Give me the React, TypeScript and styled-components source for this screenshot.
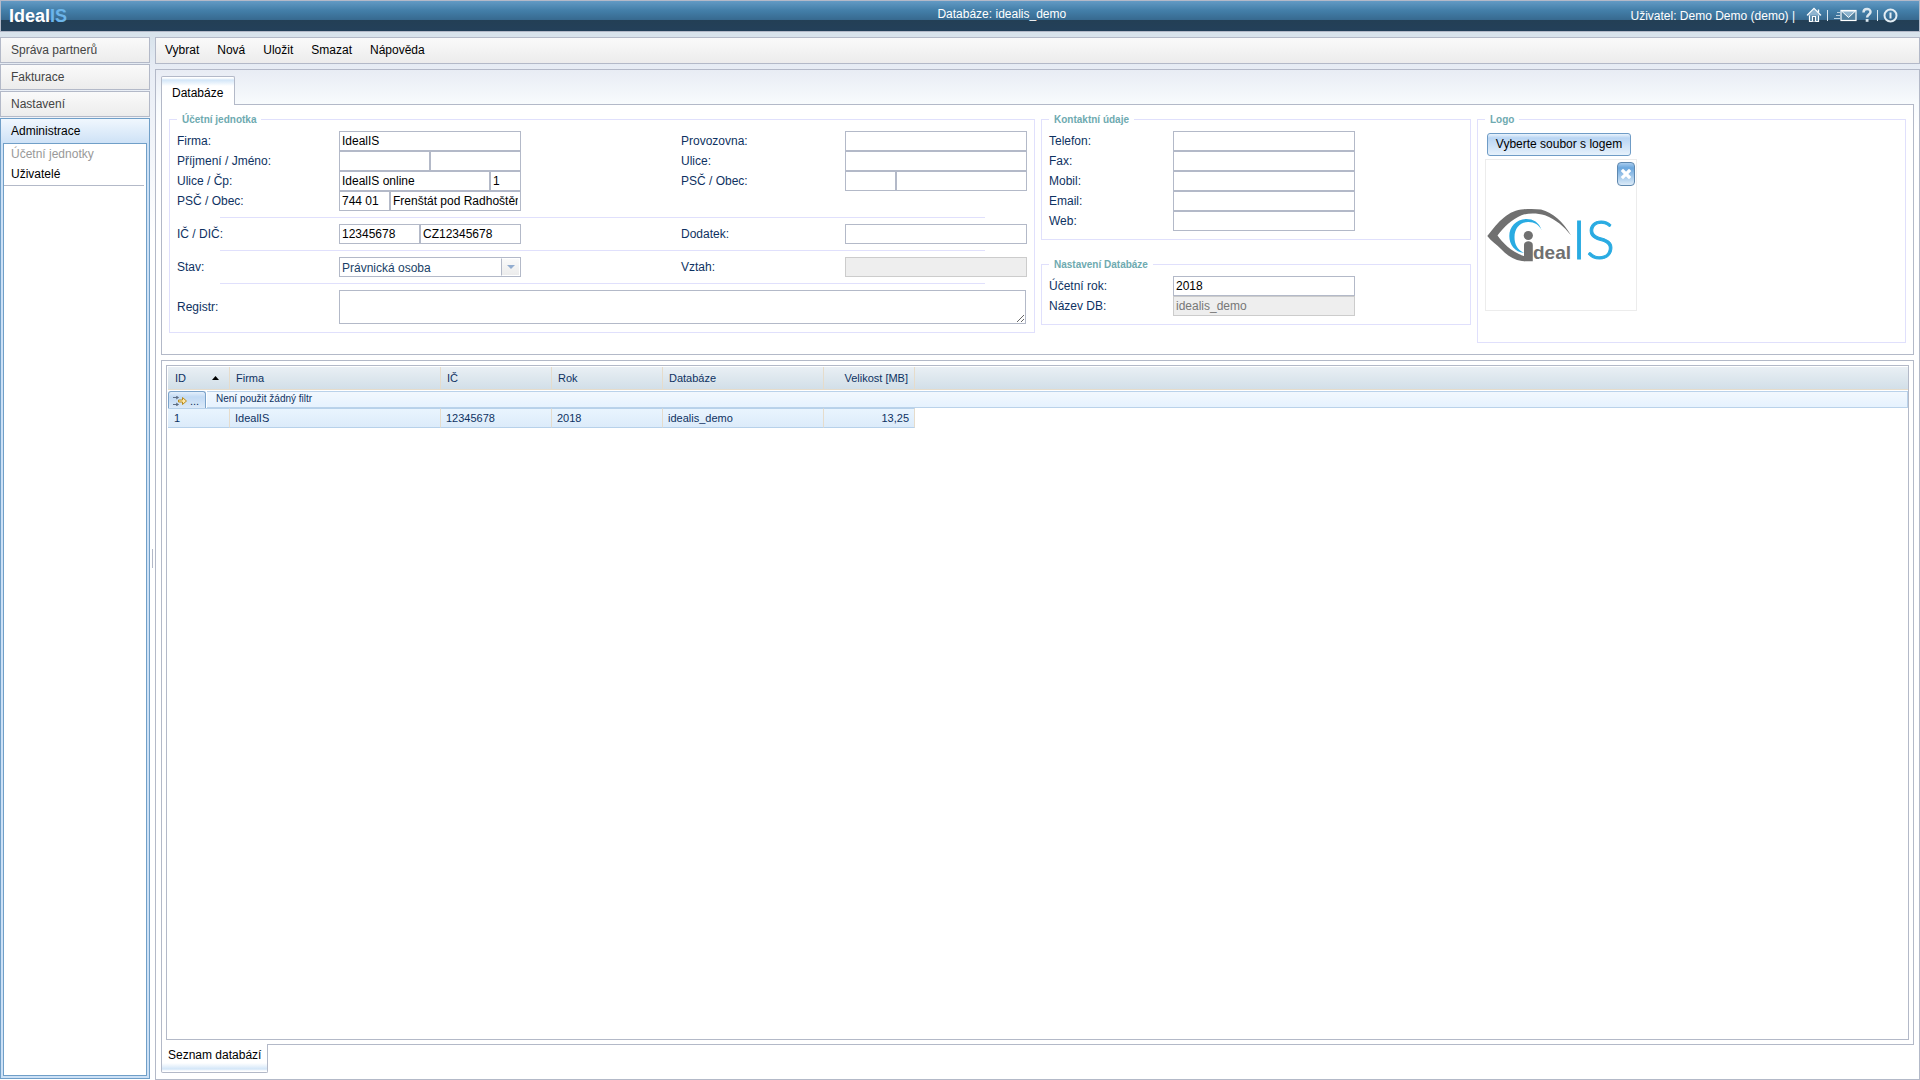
import React, { useId } from "react";
import styled, { createGlobalStyle, css } from "styled-components";

const line = "#b3b9c8";
const soft = "#e0e0fc";
const navy = "#0e3262";
const blue = "#709fc8";

const GlobalStyle = createGlobalStyle`
  *, *::before, *::after { box-sizing: border-box; }
  body {
    margin: 0;
    color: #000;
    font: 12px/20px "Liberation Sans", Arial, sans-serif;
    background: #fff linear-gradient(#d8e3ec 36px, #e8edf5 70px, #fff 240px) no-repeat;
  }
  button, input, select, textarea { font: inherit; color: inherit; margin: 0; border-radius: 0; }
  button { cursor: pointer; }
`;

const Page = styled.div`
  display: flex;
  flex-direction: column;
  gap: 5px;
  height: 100vh;
`;

/* Top bar */
const TopBar = styled.header`
  display: flex;
  flex: none;
  align-items: flex-start;
  height: 32px;
  border: 1px solid ${line};
  color: #fff;
  background: linear-gradient(#639ac4, #4480aa 9px, #37698f 19px, #233f55 19px, #23405a);
`;
const Brand = styled.div`
  flex: 0 0 20%;
  padding-left: 8px;
  font-size: 18px;
  font-weight: bold;
  line-height: 30px;
  span { color: #6cb5ea; }
`;
const DbTitle = styled.div`
  flex: 1;
  text-align: center;
  line-height: 26px;
`;
const UserArea = styled.div`
  display: flex;
  align-items: center;
  flex: none;
  width: 300px;
  height: 30px;
  padding-right: 21px;
  justify-content: flex-end;
`;
const UserName = styled.span`
  margin-right: 11px;
`;
const Icons = styled.div`
  display: flex;
  align-items: center;
  gap: 5px;
  padding-bottom: 2px;
`;
const IconLink = styled.a`
  display: block;
  height: 16px;
  color: #fff;
  svg { display: block; }
`;
const Bar = styled.span`
  width: 1px;
  height: 11px;
  background: #dbe8f0;
`;

/* Frame below the top bar */
const Body = styled.div`
  display: flex;
  flex: 1;
  min-height: 0;
`;
const Sidebar = styled.nav`
  display: flex;
  flex-direction: column;
  flex: none;
  gap: 1px;
  width: 150px;
  padding-bottom: 1px;
`;
const Section = styled.button`
  height: 26px;
  padding: 0 10px;
  border: 1px solid ${line};
  color: #444;
  text-align: left;
  line-height: 24px;
  background: linear-gradient(#fafafa, #ececec);
`;
const OpenSection = styled.div`
  display: flex;
  flex-direction: column;
  flex: 1;
  padding: 0 2px 2px;
  border: 1px solid ${blue};
  background: linear-gradient(#f0f7fe, #cde1f6 25px);
`;
const OpenTitle = styled.button`
  height: 24px;
  padding: 0 8px;
  border: 0;
  text-align: left;
  line-height: 24px;
  background: none;
`;
const SubMenu = styled.div`
  flex: 1;
  padding-right: 2px;
  border: 1px solid ${blue};
  background: #fff;
`;
const SubList = styled.ul`
  margin: 0;
  padding: 0 0 1px;
  list-style: none;
  border-bottom: 1px solid ${line};
`;
const SubLink = styled.a<{ $current?: boolean }>`
  display: block;
  padding-left: 7px;
  text-decoration: none;
  color: ${(p) => (p.$current ? "#999" : "#000")};
`;
const Splitter = styled.div`
  display: flex;
  flex: none;
  align-items: center;
  justify-content: center;
  width: 5px;
  &::after { content: ""; width: 1px; height: 19px; background: ${line}; }
`;
const Content = styled.main`
  display: flex;
  flex-direction: column;
  flex: 1;
  gap: 5px;
  min-width: 0;
`;
const Toolbar = styled.div`
  display: flex;
  align-items: flex-start;
  flex: none;
  height: 27px;
  border: 1px solid ${line};
  background: linear-gradient(#fafafa, #ececec);
`;
const ToolButton = styled.button`
  height: 24px;
  padding: 0 9px;
  border: 0;
  line-height: 24px;
  background: none;
`;
const Panel = styled.div`
  display: flex;
  flex-direction: column;
  flex: 1;
  gap: 5px;
  min-height: 0;
  padding: 6px 5px;
  border: 1px solid ${line};
  background: #fff linear-gradient(#e8ecf4, #f8fbfd 34px, #fff 60px) no-repeat;
`;

/* Tabbed panes */
const TabPane = styled.section`
  display: flex;
  flex-direction: column;
  align-items: stretch;
`;
const BottomPane = styled(TabPane)`
  flex: 1;
  min-height: 0;
`;
const tab = css`
  position: relative;
  z-index: 1;
  align-self: flex-start;
  height: 29px;
  border: 1px solid ${line};
`;
const TopTab = styled.button`
  ${tab}
  margin-bottom: -1px;
  padding: 4px 11px 0 10px;
  border-bottom: 0;
  border-radius: 2px 2px 0 0;
  background: linear-gradient(#fff 1px, #d3e6f8 3px, #fff 9px);
`;
const BottomTab = styled.button`
  ${tab}
  margin-top: -1px;
  padding: 0 6px 6px;
  border-top: 0;
  border-radius: 0 0 2px 2px;
  background: linear-gradient(to top, #fff 1px, #d3e6f8 3px, #fff 9px);
`;
const FormSheet = styled.form`
  display: grid;
  grid-template-columns: 866fr 430fr 429fr;
  align-items: start;
  gap: 6px;
  padding: 9px 7px 11px;
  border: 1px solid ${line};
  background: #fff;
`;
const GridSheet = styled.div`
  display: flex;
  flex: 1;
  min-height: 0;
  padding: 4px;
  border: 1px solid ${line};
  background: #fff;
`;

/* Form */
const Stack = styled.div`
  display: flex;
  flex-direction: column;
  gap: 19px;
  min-width: 0;
`;
const Group = styled.fieldset`
  min-width: 0;
  margin: 0;
  padding: 6px 7px 8px;
  border: 1px solid ${soft};
`;
const Legend = styled.legend`
  padding: 0 5px;
  color: #6eaab0;
  font-size: 10px;
  font-weight: bold;
  line-height: 11px;
`;
const Row = styled.div<{ $wide?: boolean }>`
  display: grid;
  grid-template-columns: ${(p) => (p.$wide ? "162px 1fr 164px 182px" : "124px 1fr")};
  align-items: center;
`;
const WideRow = styled.div`
  display: grid;
  grid-template-columns: 162px 1fr;
  align-items: center;
  padding-right: 1px;
`;
const Label = styled.label`
  color: ${navy};
`;
const Fields = styled.div`
  display: flex;
  width: 182px;
`;
const field = css`
  border: 1px solid ${line};
  background: #fff;
  outline-offset: -1px;
`;
const TextInput = styled.input<{ $w?: number }>`
  ${field}
  ${(p) => (p.$w ? `width: ${p.$w}px;` : "width: 100%;")}
  height: 20px;
  padding: 0 2px;
  &:disabled { color: #777; background: #eee; border-color: #ccc; }
`;
const SelectBox = styled.div`
  position: relative;
  width: 100%;
  height: 20px;
`;
const Select = styled.select`
  ${field}
  display: block;
  appearance: none;
  width: 100%;
  height: 20px;
  padding: 0 22px 2px 2px;
  color: #1a3f68;
`;
const SelectArrow = styled.span`
  position: absolute;
  top: 1px;
  right: 1px;
  display: flex;
  align-items: center;
  justify-content: center;
  width: 19px;
  height: 18px;
  border: 1px solid #fff;
  border-left: 1px solid ${line};
  background: linear-gradient(#fafafa, #ececec);
  pointer-events: none;
`;
const TextArea = styled.textarea`
  ${field}
  display: block;
  width: 100%;
  height: 34px;
  padding: 2px;
  resize: both;
`;
const Rule = styled.hr`
  width: 90%;
  margin: 6px auto;
  border: 0;
  border-top: 1px solid ${soft};
`;
const LogoGroup = styled(Group)`
  padding: 8px 7px 31px;
`;
const UploadButton = styled.button`
  display: block;
  width: 144px;
  height: 23px;
  margin: 0 2px 3px;
  padding: 0 0 1px;
  border: 1px solid #6f9cc6;
  border-radius: 3px;
  line-height: 20px;
  background: linear-gradient(#eaf3fc, #b9d5f3 4px, #e6f1fb);
`;
const LogoFrame = styled.div`
  position: relative;
  display: flex;
  align-items: center;
  width: 152px;
  height: 152px;
  padding: 0 1px;
  border: 1px solid #ececec;
`;
const RemoveButton = styled.button`
  position: absolute;
  top: 2px;
  right: 1px;
  display: flex;
  align-items: center;
  justify-content: center;
  width: 18px;
  height: 24px;
  padding: 0;
  border: 1px solid #5f88ae;
  border-radius: 4px;
  background: linear-gradient(#a8ccee, #6aa6dd 5px, #dcebf8);
`;

/* Data grid */
const GridFrame = styled.div`
  flex: 1;
  min-width: 0;
  overflow: auto;
  padding: 1px 0 0 1px;
  border: 1px solid ${line};
`;
const Table = styled.table`
  width: 100%;
  table-layout: fixed;
  border-collapse: separate;
  border-spacing: 0;
  color: ${navy};
  font-size: 11px;
`;
const Col = styled.col<{ $w?: number }>`
  width: ${(p) => (p.$w ? `${p.$w}px` : "auto")};
`;
const Th = styled.th<{ $right?: boolean }>`
  height: 23px;
  padding: 0 6px;
  border-right: 1px solid #e6dccb;
  border-bottom: 1px solid #e6dccb;
  font-weight: normal;
  line-height: 22px;
  text-align: ${(p) => (p.$right ? "right" : "left")};
  background: linear-gradient(#e9eff4, #d2dfe8);
  &:first-child { padding-left: 7px; }
  &:last-child { border-right: 0; }
`;
const HeadLine = styled.div`
  display: flex;
  align-items: center;
  justify-content: space-between;
  padding-right: 4px;
`;
const FilterCell = styled.td`
  padding: 1px 0 0;
`;
const FilterLine = styled.div`
  display: flex;
  gap: 1px;
  height: 17px;
`;
const FilterButton = styled.button`
  display: flex;
  align-items: center;
  gap: 2px;
  flex: none;
  width: 38px;
  padding: 1px 4px 0;
  border: 1px solid #7ba3ca;
  border-bottom: 0;
  border-radius: 3px 3px 0 0;
  color: ${navy};
  font-size: 11px;
  line-height: 12px;
  background: linear-gradient(#e4effb, #c2daf4 5px, #dbe9f8);
`;
const FilterText = styled.div`
  flex: 1;
  padding-left: 9px;
  border: 1px solid #bad2ea;
  border-left: 0;
  font-size: 10px;
  line-height: 13px;
  background: linear-gradient(#f2f8fe, #e6f2fe);
`;
const Td = styled.td<{ $right?: boolean }>`
  height: 20px;
  padding: 0 5px;
  border: 1px solid #b7d1ea;
  border-left: 0;
  border-right-color: #e6dccb;
  line-height: 18px;
  text-align: ${(p) => (p.$right ? "right" : "left")};
  background: linear-gradient(#e9f4fe, #dcebfa);
  &:first-child { padding-left: 6px; }
`;

type InputSpec = { value?: string; w?: number; disabled?: boolean; name?: string };

function Field({ label, inputs = [{}] }: { label: string; inputs?: InputSpec[] }) {
  const id = useId();
  return (
    <>
      <Label htmlFor={id}>{label}</Label>
      <Fields>
        {inputs.map((f, i) => (
          <TextInput
            key={i}
            id={i === 0 ? id : undefined}
            aria-label={f.name}
            type="text"
            $w={f.w}
            defaultValue={f.value}
            disabled={f.disabled}
          />
        ))}
      </Fields>
    </>
  );
}

function HomeIcon() {
  return (
    <svg width="16" height="16" viewBox="0 0 16 16" fill="none" stroke="#fff" strokeWidth="1.2">
      <path d="M3.5 7.5V14.5H12.5V7.5" fill="#5585a8" />
      <path d="M1 8.4 8 1.4 15 8.4" fill="#8fb4d0" strokeWidth="1.3" />
      <path d="M12.5 2.5V5.5" strokeWidth="1.4" />
      <path d="M6.5 14.5V9.5H9.5V14.5" fill="#3a5d78" />
    </svg>
  );
}

function MailIcon() {
  return (
    <svg width="24" height="16" viewBox="-1 0 24 16" fill="none" stroke="#fff">
      <path d="M3 5.5H6M2 8.5H6M0 11.5H6" stroke="#b9cfdf" />
      <rect x="7" y="3.5" width="15" height="10" fill="#51809f" strokeWidth="1.2" />
      <path d="M7.5 4 14.5 10.5 21.5 4Z" fill="#8db3cd" />
    </svg>
  );
}

function HelpIcon() {
  return (
    <svg width="10" height="16" viewBox="0 0 10 16" fill="none">
      <path d="M1.5 5.4C1.5 0.8 8.5 0.8 8.5 5C8.5 7.6 5.1 7.6 5.1 10.6" stroke="#dbe7ef" strokeWidth="2.5" />
      <rect x="3.7" y="12" width="2.8" height="2.8" fill="#dbe7ef" />
    </svg>
  );
}

function PowerIcon() {
  return (
    <svg width="15" height="16" viewBox="0 0 15 16" fill="none" stroke="#e3edf4" strokeWidth="2">
      <circle cx="7.5" cy="8.5" r="6" />
      <path d="M7.5 5.5V11.5" />
    </svg>
  );
}

function FilterIcon() {
  return (
    <svg width="15" height="10" viewBox="0 0 15 10" fill="none">
      <path d="M0 1.5H5M3 0L5.5 1.5 3 3M0 8.5H5M3 7L5.5 8.5 3 10" stroke="#5f6f86" />
      <path d="M5.5 4H9.5V1.5L13.5 5 9.5 8.5V6H5.5Z" fill="#ffe9a8" stroke="#b98a1c" />
    </svg>
  );
}

function CompanyLogo() {
  return (
    <svg width="130" height="84" viewBox="0 -15 130 84" role="img" aria-label="idealIS">
      <path
        fill="#707070"
        d="M0.3 28C6 21 11 14 17 9.500C23 4.500 29 1.600 37 1.200C43 0.700 49 0.800 54 1.500C66 4.500 76 14 84 27.300C77 18.500 69 11.500 58 7.200C50 5 41 5 34.500 7.200C25 11 16.500 19.500 10.500 27.500C15 34 24 44 37.500 48.300V53.200C28 53 20 47.500 14 41C9 36 4 33 0.300 28Z"
      />
      <path
        fill="#29abe2"
        d="M54.7 22.3C52 14 46 10.900 39 11C29 11.500 22.300 19 22.300 28C22.300 37 28 44 37 45C30 41.500 27.500 36 27.500 29C27.500 20 33 14.200 41 14C47 13.800 52 16.500 54.700 22.300Z"
      />
      <circle cx="41.3" cy="27.5" r="4.6" fill="#707070" />
      <path fill="#707070" d="M37 37C37 32 45.8 32 45.8 37V53.3H37Z" />
      <text x="46" y="51" fill="#707070" fontFamily="'Liberation Sans', Arial, sans-serif" fontWeight="bold" fontSize="19">
        deal
      </text>
      <text x="85" y="51" fill="#29abe2" stroke="#29abe2" strokeWidth="1" fontFamily="Lato, sans-serif" fontWeight="300" fontSize="54">
        IS
      </text>
    </svg>
  );
}

const tools = ["Vybrat", "Nová", "Uložit", "Smazat", "Nápověda"];
const sections = ["Správa partnerů", "Fakturace", "Nastavení"];
const columns = [62, 211, 111, 111, 161, 91];

export default function App() {
  return (
    <>
      <GlobalStyle />
      <Page>
        <TopBar>
          <Brand>
            Ideal<span>IS</span>
          </Brand>
          <DbTitle>Databáze: idealis_demo</DbTitle>
          <UserArea>
            <UserName>Uživatel: Demo Demo (demo) |</UserName>
            <Icons>
              <IconLink href="#home" aria-label="Domů"><HomeIcon /></IconLink>
              <Bar />
              <IconLink href="#mail" aria-label="Pošta"><MailIcon /></IconLink>
              <IconLink href="#help" aria-label="Nápověda"><HelpIcon /></IconLink>
              <Bar />
              <IconLink href="#logout" aria-label="Odhlásit"><PowerIcon /></IconLink>
            </Icons>
          </UserArea>
        </TopBar>
        <Body>
          <Sidebar>
            {sections.map((s) => (
              <Section key={s} type="button">{s}</Section>
            ))}
            <OpenSection>
              <OpenTitle type="button">Administrace</OpenTitle>
              <SubMenu>
                <SubList>
                  <li><SubLink href="#units" $current>Účetní jednotky</SubLink></li>
                  <li><SubLink href="#users">Uživatelé</SubLink></li>
                </SubList>
              </SubMenu>
            </OpenSection>
          </Sidebar>
          <Splitter />
          <Content>
            <Toolbar>
              {tools.map((t) => (
                <ToolButton key={t} type="button">{t}</ToolButton>
              ))}
            </Toolbar>
            <Panel>
              <TabPane>
                <TopTab type="button">Databáze</TopTab>
                <FormSheet onSubmit={(e) => e.preventDefault()}>
                  <Group>
                    <Legend>Účetní jednotka</Legend>
                    <Row $wide>
                      <Field label="Firma:" inputs={[{ value: "IdealIS" }]} />
                      <Field label="Provozovna:" />
                    </Row>
                    <Row $wide>
                      <Field label="Příjmení / Jméno:" inputs={[{ w: 91 }, { w: 91, name: "Jméno" }]} />
                      <Field label="Ulice:" />
                    </Row>
                    <Row $wide>
                      <Field label="Ulice / Čp:" inputs={[{ w: 151, value: "IdealIS online" }, { w: 31, value: "1", name: "Čp" }]} />
                      <Field label="PSČ / Obec:" inputs={[{ w: 51 }, { w: 131, name: "Obec" }]} />
                    </Row>
                    <Row $wide>
                      <Field
                        label="PSČ / Obec:"
                        inputs={[{ w: 51, value: "744 01" }, { w: 131, value: "Frenštát pod Radhoštěm", name: "Obec" }]}
                      />
                    </Row>
                    <Rule />
                    <Row $wide>
                      <Field label="IČ / DIČ:" inputs={[{ w: 81, value: "12345678" }, { w: 101, value: "CZ12345678", name: "DIČ" }]} />
                      <Field label="Dodatek:" />
                    </Row>
                    <Rule />
                    <Row $wide>
                      <Label htmlFor="stav">Stav:</Label>
                      <Fields>
                        <SelectBox>
                          <Select id="stav" defaultValue="po">
                            <option value="po">Právnická osoba</option>
                          </Select>
                          <SelectArrow>
                            <svg width="8" height="4" viewBox="0 0 8 4">
                              <path d="M0 0H8L4 4Z" fill="#93add0" />
                            </svg>
                          </SelectArrow>
                        </SelectBox>
                      </Fields>
                      <Field label="Vztah:" inputs={[{ disabled: true }]} />
                    </Row>
                    <Rule />
                    <WideRow>
                      <Label htmlFor="registr">Registr:</Label>
                      <TextArea id="registr" />
                    </WideRow>
                  </Group>
                  <Stack>
                    <Group>
                      <Legend>Kontaktní údaje</Legend>
                      {["Telefon:", "Fax:", "Mobil:", "Email:", "Web:"].map((l) => (
                        <Row key={l}><Field label={l} /></Row>
                      ))}
                    </Group>
                    <Group>
                      <Legend>Nastavení Databáze</Legend>
                      <Row><Field label="Účetní rok:" inputs={[{ value: "2018" }]} /></Row>
                      <Row><Field label="Název DB:" inputs={[{ value: "idealis_demo", disabled: true }]} /></Row>
                    </Group>
                  </Stack>
                  <LogoGroup>
                    <Legend>Logo</Legend>
                    <UploadButton type="button">Vyberte soubor s logem</UploadButton>
                    <LogoFrame>
                      <CompanyLogo />
                      <RemoveButton type="button" aria-label="Odstranit logo">
                        <svg width="12" height="12" viewBox="0 0 12 12">
                          <path d="M3 3 9 9M9 3 3 9" stroke="#fff" strokeWidth="3.2" strokeLinecap="square" />
                        </svg>
                      </RemoveButton>
                    </LogoFrame>
                  </LogoGroup>
                </FormSheet>
              </TabPane>
              <BottomPane>
                <GridSheet>
                  <GridFrame>
                    <Table>
                      <colgroup>
                        {columns.map((w, i) => <Col key={i} $w={w} />)}
                        <Col />
                      </colgroup>
                      <thead>
                        <tr>
                          <Th>
                            <HeadLine>
                              ID
                              <svg width="7" height="4" viewBox="0 0 7 4"><path d="M0 4H7L3.5 0Z" /></svg>
                            </HeadLine>
                          </Th>
                          <Th>Firma</Th>
                          <Th>IČ</Th>
                          <Th>Rok</Th>
                          <Th>Databáze</Th>
                          <Th $right>Velikost [MB]</Th>
                          <Th />
                        </tr>
                      </thead>
                      <tbody>
                        <tr>
                          <FilterCell colSpan={7}>
                            <FilterLine>
                              <FilterButton type="button" aria-label="Filtr"><FilterIcon />...</FilterButton>
                              <FilterText>Není použit žádný filtr</FilterText>
                            </FilterLine>
                          </FilterCell>
                        </tr>
                        <tr>
                          <Td>1</Td>
                          <Td>IdealIS</Td>
                          <Td>12345678</Td>
                          <Td>2018</Td>
                          <Td>idealis_demo</Td>
                          <Td $right>13,25</Td>
                          <td />
                        </tr>
                      </tbody>
                    </Table>
                  </GridFrame>
                </GridSheet>
                <BottomTab type="button">Seznam databází</BottomTab>
              </BottomPane>
            </Panel>
          </Content>
        </Body>
      </Page>
    </>
  );
}
